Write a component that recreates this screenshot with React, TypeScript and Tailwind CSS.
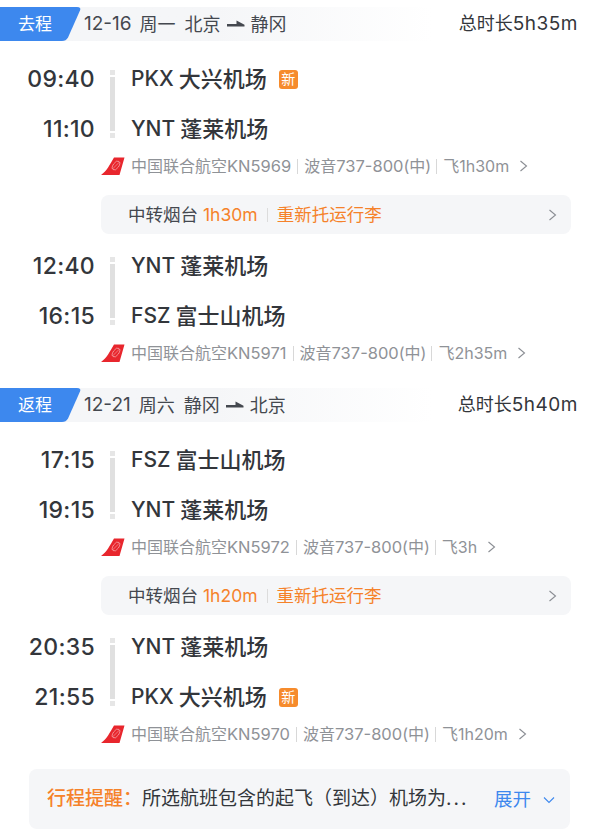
import React from "react";

const font = { fontFamily: '"Inter", "Noto Sans CJK SC", sans-serif' };

// Airline tail logo
const TailLogo = () => (
  <svg width="24" height="18" viewBox="0 0 24 18" className="shrink-0">
    <path d="M0 18 C6 14 9 7 13 0.5 H23.5 L18.5 18 Z" fill="#e8262d" />
    <ellipse cx="15" cy="8.5" rx="2.8" ry="5" transform="rotate(35 15 8.5)" fill="none" stroke="#fff" strokeWidth="0.7" opacity="0.6" />
    <path d="M11.5 12 L18.5 5" stroke="#fff" strokeWidth="0.6" opacity="0.6" />
  </svg>
);

const RouteArrow = () => (
  <svg width="18" height="8" viewBox="0 0 18 8" className="shrink-0">
    <path d="M0 4 H9.5 V0.5 L17.5 4.8 V6.5 H0 Z" fill="#44484f" />
  </svg>
);

const Chevron = ({ color = "#8a8d93" }: { color?: string }) => (
  <svg width="9" height="12" viewBox="0 0 9 12" fill="none" className="shrink-0">
    <path d="M1.5 1 L7.5 6 L1.5 11" stroke={color} strokeWidth="1.1" />
  </svg>
);

const NewBadge = () => (
  <span className="ml-[12px] flex h-[19px] w-[19px] items-center justify-center rounded-[3px] bg-[#f68b2c] text-[14px] font-normal leading-none text-white">
    新
  </span>
);

type Stop = { time: string; code: string; name: string; isNew?: boolean };

const Airport = ({ stop }: { stop: Stop }) => (
  <div className="flex h-[50px] items-center">
    <span className="mr-[5px] text-[21px]">{stop.code}</span>
    <span>{stop.name}</span>
    {stop.isNew && <NewBadge />}
  </div>
);

const Segment = ({ from, to, flight, duration }: { from: Stop; to: Stop; flight: string; duration: string }) => (
  <div>
    <div className="flex h-[100px]">
      <div className="flex w-[95px] flex-col text-right text-[23px] font-medium tracking-[0.3px] text-[#33363b]">
        <div className="flex h-[50px] items-center justify-end">{from.time}</div>
        <div className="flex h-[50px] items-center justify-end">{to.time}</div>
      </div>
      <div className="ml-[15px] flex w-[5px] flex-col gap-[2px] py-[16px]">
        <div className="h-[5px] bg-[#e6e6e6]" />
        <div className="flex-1 bg-[#e0e0e0]" />
        <div className="h-[5px] bg-[#e6e6e6]" />
      </div>
      <div className="ml-[16px] flex flex-col text-[22px] font-medium text-[#33363b]">
        <Airport stop={from} />
        <Airport stop={to} />
      </div>
    </div>
    <div className="flex h-[24px] items-center text-[16px] text-[#8f9297]">
      <div className="ml-[101px] w-[30px]">
        <TailLogo />
      </div>
      <span>
        中国联合航空<span className="text-[16.5px]">{flight}</span>
      </span>
      <span className="mx-[6px] h-[15px] w-px bg-[#d8d8d8]" />
      <span>
        波音<span className="text-[16.5px]">737-800</span>(中)
      </span>
      <span className="ml-[5px] mr-[6px] h-[15px] w-px bg-[#d8d8d8]" />
      <span>飞{duration}</span>
      <span className="ml-[10px]">
        <Chevron />
      </span>
    </div>
  </div>
);

const Header = ({ tag, date, week, from, to, total }: { tag: string; date: string; week: string; from: string; to: string; total: string }) => (
  <div className="flex h-[34px] items-center justify-between pr-[22px]">
    <div className="flex h-full w-[432px] items-center bg-gradient-to-r from-[#f5f6f8] via-[#f5f6f8] to-white">
      <div className="flex h-full w-[81px] items-center bg-[#3d88ee] pl-[18px] pt-[1px] text-[17px] text-white [clip-path:path('M0_0H77Q81.5_0_80_3.5L68_30.5Q66_34_62_34H0Z')]">
        {tag}
      </div>
      <div className="ml-[3px] flex items-center text-[18px] text-[#44484f]">
        <span className="text-[19px]">{date}</span>
        <span className="ml-[8px]">{week}</span>
        <span className="ml-[9px]">{from}</span>
        <span className="mx-[6px]">
          <RouteArrow />
        </span>
        <span>{to}</span>
      </div>
    </div>
    <div className="text-[18px] text-[#33363b]">
      总时长<span className="text-[19px] tracking-[0.5px]">{total}</span>
    </div>
  </div>
);

const Transfer = ({ time }: { time: string }) => (
  <div className="ml-[101px] mr-[29px] mt-[17px] flex h-[39px] items-center justify-between rounded-[8px] bg-[#f5f6f8] pl-[27px] pr-[14px] text-[17.5px]">
    <div className="flex items-center pt-[1px]">
      <span className="text-[#44484f]">中转烟台</span>
      <span className="ml-[5px] text-[#f5822a]">{time}</span>
      <span className="mx-[9px] h-[14px] w-px bg-[#dcdcdc]" />
      <span className="text-[#f5822a]">重新托运行李</span>
    </div>
    <Chevron />
  </div>
);

export default function App() {
  return (
    <div className="h-[833px] w-[600px] overflow-hidden bg-white pt-[7px]" style={font}>
      <Header tag="去程" date="12-16" week="周一" from="北京" to="静冈" total="5h35m" />
      <div className="mt-[13px]">
        <Segment
          from={{ time: "09:40", code: "PKX", name: "大兴机场", isNew: true }}
          to={{ time: "11:10", code: "YNT", name: "蓬莱机场" }}
          flight="KN5969"
          duration="1h30m"
        />
      </div>
      <Transfer time="1h30m" />
      <div className="mt-[7px]">
        <Segment
          from={{ time: "12:40", code: "YNT", name: "蓬莱机场" }}
          to={{ time: "16:15", code: "FSZ", name: "富士山机场" }}
          flight="KN5971"
          duration="2h35m"
        />
      </div>
      <div className="mt-[23px]">
        <Header tag="返程" date="12-21" week="周六" from="静冈" to="北京" total="5h40m" />
      </div>
      <div className="mt-[13px]">
        <Segment
          from={{ time: "17:15", code: "FSZ", name: "富士山机场" }}
          to={{ time: "19:15", code: "YNT", name: "蓬莱机场" }}
          flight="KN5972"
          duration="3h"
        />
      </div>
      <Transfer time="1h20m" />
      <div className="mt-[7px]">
        <Segment
          from={{ time: "20:35", code: "YNT", name: "蓬莱机场" }}
          to={{ time: "21:55", code: "PKX", name: "大兴机场", isNew: true }}
          flight="KN5970"
          duration="1h20m"
        />
      </div>
      <div className="ml-[29px] mr-[30px] mt-[23px] flex h-[60px] items-center rounded-[8px] bg-[#f5f6f8] pl-[18px] pr-[15px] pt-[1px] text-[19px]">
        <span className="font-medium text-[#f5822a]">行程提醒：</span>
        <span className="flex-1 truncate text-[#33363b]">
          所选航班包含的起飞（到达）机场为<span className="tracking-[2px]">...</span>
        </span>
        <span className="ml-[20px] text-[18.5px] text-[#3d88ee]">展开</span>
        <svg width="12" height="8" viewBox="0 0 12 8" fill="none" className="ml-[12px]">
          <path d="M1 1.5 L6 6.5 L11 1.5" stroke="#3d88ee" strokeWidth="1.1" />
        </svg>
      </div>
    </div>
  );
}
